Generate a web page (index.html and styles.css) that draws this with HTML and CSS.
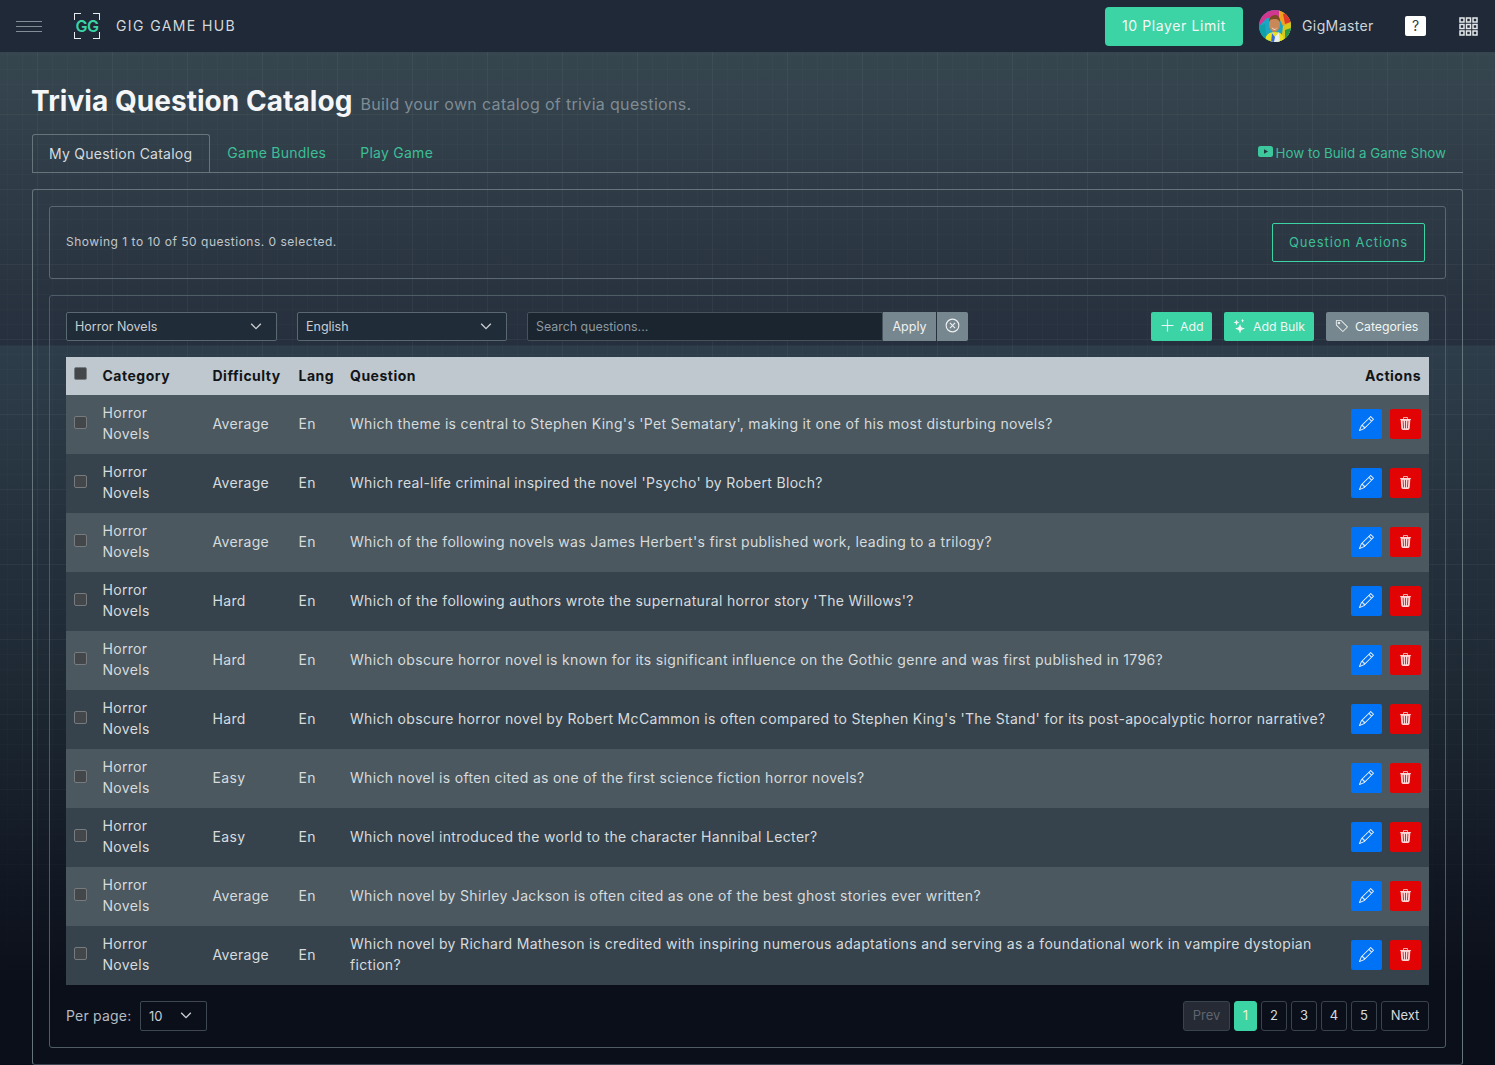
FILE: index.html
```html
<!DOCTYPE html>
<html>
<head>
    <meta charset="utf-8">
    <title>Trivia Question Catalog</title>
    <link rel="stylesheet" href="styles.css">
</head>
<body>
<svg class="sprite" xmlns="http://www.w3.org/2000/svg">
    <symbol id="i-pencil" viewBox="0 0 16 16"><path d="M12.146.146a.5.5 0 0 1 .708 0l3 3a.5.5 0 0 1 0 .708l-10 10a.5.5 0 0 1-.168.11l-5 2a.5.5 0 0 1-.65-.65l2-5a.5.5 0 0 1 .11-.168l10-10zM11.207 2.5 13.5 4.793 14.793 3.5 12.5 1.207 11.207 2.5zm1.586 3L10.5 3.207 4 9.707V10h.5a.5.5 0 0 1 .5.5v.5h.5a.5.5 0 0 1 .5.5v.5h.293l6.5-6.5zm-9.761 5.175-.106.106-1.528 3.821 3.821-1.528.106-.106A.5.5 0 0 1 5 12.5V12h-.5a.5.5 0 0 1-.5-.5V11h-.5a.5.5 0 0 1-.468-.325z"/></symbol>
    <symbol id="i-trash" viewBox="0 0 16 16"><path d="M11 1.5v1h3.5a.5.5 0 0 1 0 1h-.538l-.853 10.66A2 2 0 0 1 11.115 16h-6.23a2 2 0 0 1-1.994-1.84L2.038 3.5H1.5a.5.5 0 0 1 0-1H5v-1A1.5 1.5 0 0 1 6.5 0h3A1.5 1.5 0 0 1 11 1.5Zm-5 0v1h4v-1a.5.5 0 0 0-.5-.5h-3a.5.5 0 0 0-.5.5ZM4.5 5.029l.5 8.5a.5.5 0 1 0 .998-.06l-.5-8.5a.5.5 0 1 0-.998.06Zm6.53-.528a.5.5 0 0 0-.528.47l-.5 8.5a.5.5 0 0 0 .998.058l.5-8.5a.5.5 0 0 0-.47-.528ZM8 4.5a.5.5 0 0 0-.5.5v8.5a.5.5 0 0 0 1 0V5a.5.5 0 0 0-.5-.5Z"/></symbol>
    <symbol id="i-chevron" viewBox="0 0 16 16"><path d="M2.5 5.5 8 11l5.5-5.5" fill="none" stroke="currentColor" stroke-width="1.6"/></symbol>
</svg>

<header class="topbar">
    <div class="menu-lines"><span></span><span></span><span></span></div>
    <div class="logo">
        <i class="corner tl"></i><i class="corner tr"></i><i class="corner bl"></i><i class="corner br"></i>
        <span class="logo-text">GG</span>
    </div>
    <span class="brand">GIG GAME HUB</span>
    <div class="topbar-right">
        <a class="limit-btn">10 Player Limit</a>
        <svg class="avatar" viewBox="0 0 32 32">
            <defs><clipPath id="avatar-clip"><circle cx="16" cy="16" r="16"/></clipPath></defs>
            <g clip-path="url(#avatar-clip)">
                <rect width="32" height="32" fill="#1aa6c4"/>
                <path d="M0 0h20v8H8L0 16z" fill="#d0388f"/>
                <path d="M20 0h12v14l-8 2-4-8z" fill="#f0a020"/>
                <path d="M24 4l8-2v10l-6 2z" fill="#e03a2a"/>
                <path d="M0 16l6-2 2 18H0z" fill="#12a0a8"/>
                <path d="M24 16l8-4v20H22z" fill="#d8c81c"/>
                <path d="M26 20l6-2v8l-6 2z" fill="#2a9a48"/>
                <path d="M6 32c0-7 4-10 10-10s9 3 9 10z" fill="#e8e020"/>
                <path d="M13 22l3 5 4-5 1 10h-9z" fill="#e6eef2"/>
                <path d="M13 23l3 4-1 5h-3z" fill="#3a6ad0"/>
                <ellipse cx="15.500" cy="14" rx="5.500" ry="8" fill="#c88858"/>
                <path d="M10 12c0-5 3-7 6-7s5 2 5 7c-2-3-3-3-5-3s-5 0-6 3z" fill="#7a4a20"/>
                <path d="M12.500 17c2 2.500 5 2.500 6 0-1 3.500-5 3.500-6 0z" fill="#f6f0e6"/>
            </g>
        </svg>
        <span class="username">GigMaster</span>
        <span class="help-btn">?</span>
        <svg class="apps" viewBox="0 0 19 19" fill="none" stroke="#e6e9ec" stroke-width="1.500">
            <rect x="1" y="1" width="4" height="4"/><rect x="7.500" y="1" width="4" height="4"/><rect x="14" y="1" width="4" height="4"/>
            <rect x="1" y="7.500" width="4" height="4"/><rect x="7.500" y="7.500" width="4" height="4"/><rect x="14" y="7.500" width="4" height="4"/>
            <rect x="1" y="14" width="4" height="4"/><rect x="7.500" y="14" width="4" height="4"/><rect x="14" y="14" width="4" height="4"/>
        </svg>
    </div>
</header>

<main class="page">
    <div class="title-row">
        <h1>Trivia Question Catalog</h1>
        <span class="subtitle">Build your own catalog of trivia questions.</span>
    </div>

    <nav class="tabs">
        <a class="tab active">My Question Catalog</a>
        <a class="tab">Game Bundles</a>
        <a class="tab">Play Game</a>
        <a class="how-to">
            <svg viewBox="0 0 15 11"><rect width="15" height="11" rx="2.500" fill="#3cc79d"/><path d="M6 3.200v4.600L10 5.500z" fill="#24343d"/></svg>
            How to Build a Game Show
        </a>
    </nav>

    <section class="card">
        <div class="panel status-panel">
            <span class="status-text">Showing 1 to 10 of 50 questions. 0 selected.</span>
            <a class="outline-btn">Question Actions</a>
        </div>

        <div class="panel table-panel">
            <div class="toolbar">
                <div class="select category-select"><span>Horror Novels</span><svg><use href="#i-chevron"/></svg></div>
                <div class="select lang-select"><span>English</span><svg><use href="#i-chevron"/></svg></div>
                <div class="search-group">
                    <div class="search-input">Search questions...</div>
                    <a class="gray-btn apply">Apply</a>
                    <a class="gray-btn clear">
                        <svg viewBox="0 0 16 16" fill="none" stroke="currentColor" stroke-width="1.200"><circle cx="8" cy="8" r="6.800"/><path d="M5.300 5.300l5.400 5.400M10.700 5.300l-5.400 5.400"/></svg>
                    </a>
                </div>
                <div class="toolbar-right">
                    <a class="action-btn green add">
                        <svg viewBox="0 0 12 12" fill="none" stroke="currentColor" stroke-width="1.100"><path d="M6 .5v11M.5 6h11"/></svg>
                        Add
                    </a>
                    <a class="action-btn green bulk">
                        <svg viewBox="0 0 16 16" fill="currentColor"><path d="M7.657 6.247c.11-.33.576-.33.686 0l.645 1.937a2.890 2.890 0 0 0 1.829 1.828l1.936.645c.33.11.33.576 0 .686l-1.937.645a2.890 2.890 0 0 0-1.828 1.829l-.645 1.936a.361.361 0 0 1-.686 0l-.645-1.937a2.890 2.890 0 0 0-1.828-1.828l-1.937-.645a.361.361 0 0 1 0-.686l1.937-.645a2.890 2.890 0 0 0 1.828-1.828l.645-1.937zM3.794 1.148a.217.217 0 0 1 .412 0l.387 1.162c.173.518.579.924 1.097 1.097l1.162.387a.217.217 0 0 1 0 .412l-1.162.387A1.734 1.734 0 0 0 4.593 5.690l-.387 1.162a.217.217 0 0 1-.412 0L3.407 5.690A1.734 1.734 0 0 0 2.310 4.593l-1.162-.387a.217.217 0 0 1 0-.412l1.162-.387A1.734 1.734 0 0 0 3.407 2.310l.387-1.162zM10.863.099a.145.145 0 0 1 .274 0l.258.774c.115.346.386.617.732.732l.774.258a.145.145 0 0 1 0 .274l-.774.258a1.156 1.156 0 0 0-.732.732l-.258.774a.145.145 0 0 1-.274 0l-.258-.774a1.156 1.156 0 0 0-.732-.732L9.100 2.137a.145.145 0 0 1 0-.274l.774-.258c.346-.115.617-.386.732-.732L10.863.100z"/></svg>
                        Add Bulk
                    </a>
                    <a class="action-btn gray cats">
                        <svg viewBox="0 0 16 16" fill="currentColor"><path d="M6 4.500a1.500 1.500 0 1 1-3 0 1.500 1.500 0 0 1 3 0zm-1 0a.5.5 0 1 0-1 0 .5.5 0 0 0 1 0z"/><path d="M2 1h4.586a1 1 0 0 1 .707.293l7 7a1 1 0 0 1 0 1.414l-4.586 4.586a1 1 0 0 1-1.414 0l-7-7A1 1 0 0 1 1 6.586V2a1 1 0 0 1 1-1zm0 5.586 7 7L13.586 9l-7-7H2v4.586z"/></svg>
                        Categories
                    </a>
                </div>
            </div>

            <table class="questions">
                <colgroup>
                    <col class="c-check"><col class="c-cat"><col class="c-diff"><col class="c-lang"><col><col class="c-act">
                </colgroup>
                <thead>
                    <tr>
                        <th><i class="check"></i></th>
                        <th>Category</th>
                        <th>Difficulty</th>
                        <th>Lang</th>
                        <th>Question</th>
                        <th class="right">Actions</th>
                    </tr>
                </thead>
                <tbody>
                    <tr>
                        <td><i class="check"></i></td><td>Horror Novels</td><td>Average</td><td>En</td>
                        <td>Which theme is central to Stephen King's 'Pet Sematary', making it one of his most disturbing novels?</td>
                        <td class="right"><a class="icon-btn edit"><svg><use href="#i-pencil"/></svg></a><a class="icon-btn del"><svg><use href="#i-trash"/></svg></a></td>
                    </tr>
                    <tr>
                        <td><i class="check"></i></td><td>Horror Novels</td><td>Average</td><td>En</td>
                        <td>Which real-life criminal inspired the novel 'Psycho' by Robert Bloch?</td>
                        <td class="right"><a class="icon-btn edit"><svg><use href="#i-pencil"/></svg></a><a class="icon-btn del"><svg><use href="#i-trash"/></svg></a></td>
                    </tr>
                    <tr>
                        <td><i class="check"></i></td><td>Horror Novels</td><td>Average</td><td>En</td>
                        <td>Which of the following novels was James Herbert's first published work, leading to a trilogy?</td>
                        <td class="right"><a class="icon-btn edit"><svg><use href="#i-pencil"/></svg></a><a class="icon-btn del"><svg><use href="#i-trash"/></svg></a></td>
                    </tr>
                    <tr>
                        <td><i class="check"></i></td><td>Horror Novels</td><td>Hard</td><td>En</td>
                        <td>Which of the following authors wrote the supernatural horror story 'The Willows'?</td>
                        <td class="right"><a class="icon-btn edit"><svg><use href="#i-pencil"/></svg></a><a class="icon-btn del"><svg><use href="#i-trash"/></svg></a></td>
                    </tr>
                    <tr>
                        <td><i class="check"></i></td><td>Horror Novels</td><td>Hard</td><td>En</td>
                        <td>Which obscure horror novel is known for its significant influence on the Gothic genre and was first published in 1796?</td>
                        <td class="right"><a class="icon-btn edit"><svg><use href="#i-pencil"/></svg></a><a class="icon-btn del"><svg><use href="#i-trash"/></svg></a></td>
                    </tr>
                    <tr>
                        <td><i class="check"></i></td><td>Horror Novels</td><td>Hard</td><td>En</td>
                        <td>Which obscure horror novel by Robert McCammon is often compared to Stephen King's 'The Stand' for its post-apocalyptic horror narrative?</td>
                        <td class="right"><a class="icon-btn edit"><svg><use href="#i-pencil"/></svg></a><a class="icon-btn del"><svg><use href="#i-trash"/></svg></a></td>
                    </tr>
                    <tr>
                        <td><i class="check"></i></td><td>Horror Novels</td><td>Easy</td><td>En</td>
                        <td>Which novel is often cited as one of the first science fiction horror novels?</td>
                        <td class="right"><a class="icon-btn edit"><svg><use href="#i-pencil"/></svg></a><a class="icon-btn del"><svg><use href="#i-trash"/></svg></a></td>
                    </tr>
                    <tr>
                        <td><i class="check"></i></td><td>Horror Novels</td><td>Easy</td><td>En</td>
                        <td>Which novel introduced the world to the character Hannibal Lecter?</td>
                        <td class="right"><a class="icon-btn edit"><svg><use href="#i-pencil"/></svg></a><a class="icon-btn del"><svg><use href="#i-trash"/></svg></a></td>
                    </tr>
                    <tr>
                        <td><i class="check"></i></td><td>Horror Novels</td><td>Average</td><td>En</td>
                        <td>Which novel by Shirley Jackson is often cited as one of the best ghost stories ever written?</td>
                        <td class="right"><a class="icon-btn edit"><svg><use href="#i-pencil"/></svg></a><a class="icon-btn del"><svg><use href="#i-trash"/></svg></a></td>
                    </tr>
                    <tr>
                        <td><i class="check"></i></td><td>Horror Novels</td><td>Average</td><td>En</td>
                        <td>Which novel by Richard Matheson is credited with inspiring numerous adaptations and serving as a foundational work in vampire dystopian fiction?</td>
                        <td class="right"><a class="icon-btn edit"><svg><use href="#i-pencil"/></svg></a><a class="icon-btn del"><svg><use href="#i-trash"/></svg></a></td>
                    </tr>
                </tbody>
            </table>

            <div class="table-footer">
                <label class="per-page">Per page:</label>
                <div class="select page-select"><span>10</span><svg><use href="#i-chevron"/></svg></div>
                <div class="pagination">
                    <a class="pg prev">Prev</a>
                    <a class="pg current">1</a>
                    <a class="pg num">2</a>
                    <a class="pg num">3</a>
                    <a class="pg num">4</a>
                    <a class="pg num">5</a>
                    <a class="pg next">Next</a>
                </div>
            </div>
        </div>
    </section>
</main>
</body>
</html>
```

FILE: styles.css
```css
html, body, h1 {
    margin: 0;
    padding: 0;
}

body {
    min-height: 1065px;
    color: #d6dbde;
    font: 14px/21px Inter, "Noto Sans", sans-serif;
    background-color: #0b0f1a;
    background-image:
        linear-gradient(to bottom, rgba(11, 15, 26, 0) 690px, #0b0f1a 985px),
        linear-gradient(to right, rgba(255, 255, 255, .028) 1px, transparent 1px),
        linear-gradient(to bottom, rgba(255, 255, 255, .028) 1px, transparent 1px),
        linear-gradient(to right, rgba(255, 255, 255, .014) 1px, transparent 1px),
        linear-gradient(to bottom, rgba(255, 255, 255, .014) 1px, transparent 1px),
        linear-gradient(to bottom, #36464f 52px, #262f3d 345px, #2e3d4a 346px, #1d2833 690px);
    background-size: 100% 100%, 75px 75px, 75px 75px, 15px 15px, 15px 15px, 100% 100%;
    background-position: 0 0, 37px 39px, 37px 39px, 7px 9px, 7px 9px, 0 0;
    background-repeat: no-repeat, repeat, repeat, repeat, repeat, no-repeat;
}

a {
    cursor: pointer;
}

.sprite {
    display: none;
}

/* top bar */
.topbar {
    display: flex;
    align-items: center;
    box-sizing: border-box;
    height: 52px;
    padding: 0 17px 0 16px;
    background: #1f2937;
}

.menu-lines {
    display: flex;
    flex-direction: column;
    gap: 4px;
    width: 26px;
    margin-right: 32px;
}

.menu-lines span {
    display: block;
    height: 1px;
    background: #838d97;
}

.logo {
    position: relative;
    display: flex;
    align-items: center;
    justify-content: center;
    width: 26px;
    height: 26px;
    margin-right: 16px;
}

.logo-text {
    color: #3cd3a5;
    font-size: 16px;
    font-weight: 600;
    letter-spacing: -.5px;
}

.corner {
    position: absolute;
    width: 6px;
    height: 6px;
    border: 0 solid #e8ebee;
}

.corner.tl { top: 0; left: 0; border-width: 1px 0 0 1px; }
.corner.tr { top: 0; right: 0; border-width: 1px 1px 0 0; }
.corner.bl { bottom: 0; left: 0; border-width: 0 0 1px 1px; }
.corner.br { bottom: 0; right: 0; border-width: 0 1px 1px 0; }

.brand {
    padding-bottom: 2px;
    color: #d3d8dc;
    font-size: 14px;
    letter-spacing: 1.4px;
}

.topbar-right {
    display: flex;
    align-items: center;
    margin-left: auto;
}

.limit-btn {
    box-sizing: border-box;
    width: 138px;
    height: 39px;
    margin-right: 16px;
    border-radius: 4px;
    background: #3cd3a5;
    color: #f2f7f5;
    line-height: 37px;
    text-align: center;
    letter-spacing: .6px;
}

.avatar {
    width: 32px;
    height: 32px;
    margin-right: 11px;
}

.username {
    width: 103px;
    padding-bottom: 2px;
    color: #cfd4d8;
    letter-spacing: .4px;
}

.help-btn {
    width: 21px;
    height: 20px;
    margin-right: 33px;
    border-radius: 2px;
    background: #fff;
    color: #333b44;
    font-size: 14px;
    line-height: 20px;
    text-align: center;
}

.apps {
    width: 19px;
    height: 19px;
}

/* page head */
.page {
    padding: 0 32px;
}

.title-row {
    display: flex;
    align-items: flex-start;
    gap: 8px;
    height: 82px;
    box-sizing: border-box;
    padding-top: 31px;
}

h1 {
    margin-left: -1px;
    color: #f4f6f7;
    font-size: 28px;
    font-weight: 700;
    line-height: 36px;
    letter-spacing: .05px;
}

.subtitle {
    margin-top: 11px;
    color: #7f8c94;
    font-size: 16px;
    letter-spacing: .33px;
}

.tabs {
    display: flex;
    align-items: flex-end;
    height: 39px;
    border-bottom: 1px solid #66747c;
    box-sizing: border-box;
}

.tab {
    box-sizing: border-box;
    height: 38px;
    padding: 0 17px;
    color: #3cbf97;
    line-height: 37px;
    letter-spacing: .25px;
}

.tab.active {
    border: 1px solid #66747c;
    border-bottom: 0;
    border-radius: 3px 3px 0 0;
    padding: 0 17px 0 16px;
    color: #d6dbde;
}

.how-to {
    display: flex;
    align-items: center;
    gap: 3px;
    height: 38px;
    margin-left: auto;
    padding-right: 17px;
    color: #3cbf97;
    font-size: 13.350px;
}

.how-to svg {
    width: 15px;
    height: 11px;
    margin-top: -3px;
}

/* cards */
.card {
    margin-top: 16px;
    padding: 16px;
    border: 1px solid #66747c;
    border-bottom-color: #3a4550;
    border-radius: 3px;
}

.panel {
    border: 1px solid #5a6872;
    border-radius: 3px;
    padding: 16px;
}

.panel.table-panel {
    margin-top: 16px;
    border-color: #4f5c66;
}

.status-panel {
    display: flex;
    align-items: center;
    justify-content: space-between;
    height: 73px;
    box-sizing: border-box;
    padding-right: 20px;
}

.status-text {
    padding-bottom: 2px;
    color: #c0c7cc;
    font-size: 12px;
    letter-spacing: .5px;
}

.outline-btn {
    box-sizing: border-box;
    width: 153px;
    height: 39px;
    border: 1px solid #3cd3a5;
    border-radius: 2px;
    color: #3cbf97;
    line-height: 37px;
    text-align: center;
    font-size: 13px;
    letter-spacing: .9px;
}

/* toolbar */
.toolbar {
    display: flex;
    align-items: center;
    height: 29px;
    margin-bottom: 16px;
    font-size: 13px;
}

.select {
    display: flex;
    align-items: center;
    justify-content: space-between;
    box-sizing: border-box;
    height: 29px;
    padding: 0 8px;
    border: 1px solid #5a6872;
    border-radius: 2px;
    background: #212c39;
    color: #c9cfd3;
    font-size: 12.500px;
}

.select svg {
    width: 14px;
    height: 14px;
    margin-right: 5px;
    margin-top: -2px;
}

.category-select {
    width: 211px;
    margin-right: 20px;
}

.lang-select {
    width: 210px;
    margin-right: 20px;
}

.search-group {
    display: flex;
    height: 29px;
}

.search-input {
    box-sizing: border-box;
    width: 356px;
    height: 29px;
    padding: 0 8px;
    border: 1px solid #46525c;
    border-radius: 2px 0 0 2px;
    background: #1a2530;
    color: #8f999f;
    font-size: 12.400px;
    line-height: 27px;
}

.gray-btn {
    box-sizing: border-box;
    height: 29px;
    background: #76878f;
    color: #eef1f2;
    line-height: 29px;
    text-align: center;
    font-size: 12.500px;
}

.gray-btn.apply {
    width: 53px;
    margin-right: 1px;
}

.gray-btn.clear {
    display: flex;
    align-items: center;
    justify-content: center;
    width: 31px;
    border-radius: 0 2px 2px 0;
}

.clear svg {
    width: 15px;
    height: 15px;
    margin-top: -2px;
}

.toolbar-right {
    display: flex;
    gap: 12px;
    margin-left: auto;
}

.action-btn {
    display: flex;
    align-items: center;
    box-sizing: border-box;
    height: 29px;
    padding-left: 10px;
    border-radius: 2px;
    color: #f0f6f4;
    font-size: 12.300px;
}

.action-btn svg {
    width: 13px;
    height: 13px;
    margin-right: 6px;
    margin-top: -2px;
}

.action-btn.bulk svg,
.action-btn.cats svg {
    width: 14px;
    height: 14px;
    margin-left: -1px;
}

.action-btn.green { background: #3cd3a5; }
.action-btn.gray { background: #76878f; }
.action-btn.add { width: 61px; }
.action-btn.bulk { width: 90px; }
.action-btn.cats { width: 103px; }

/* table */
.questions {
    width: 100%;
    border-collapse: collapse;
    table-layout: fixed;
}

.c-check { width: 28.500px; }
.c-cat { width: 110px; }
.c-diff { width: 86px; }
.c-lang { width: 51.500px; }
.c-act { width: 86px; }

.questions th {
    height: 38px;
    box-sizing: border-box;
    padding: 0 8px 2px;
    background: #bfc8ce;
    color: #111418;
    font-size: 14px;
    font-weight: 700;
    text-align: left;
    letter-spacing: .5px;
}

.questions td {
    height: 59px;
    box-sizing: border-box;
    padding: 0 8px 3px;
    color: #d6dbde;
    font-size: 14px;
    letter-spacing: .32px;
}

.questions tbody tr:nth-child(odd) { background: #4b585f; }
.questions tbody tr:nth-child(even) { background: #36434c; }

.questions .right {
    text-align: right;
}

.questions td.right,
.questions td:first-child {
    padding-bottom: 1px;
}

.check {
    display: block;
    box-sizing: border-box;
    width: 13px;
    height: 13px;
    margin-top: -3px;
    border: 1px solid #767b7f;
    border-radius: 2px;
    background: #43474a;
}

.icon-btn {
    display: inline-flex;
    align-items: center;
    justify-content: center;
    width: 31px;
    height: 30px;
    border-radius: 2px;
    vertical-align: middle;
}

.icon-btn + .icon-btn {
    margin-left: 8px;
}

.icon-btn svg {
    width: 13px;
    height: 13px;
    margin-top: -2px;
    fill: #f0f4f8;
}

.icon-btn.edit svg {
    width: 15px;
    height: 15px;
}

.icon-btn.edit { background: #0072f5; }
.icon-btn.del { background: #e20404; }
.icon-btn.del svg { fill: #fbd7d7; }

/* footer */
.table-footer {
    display: flex;
    align-items: center;
    height: 30px;
    margin-top: 16px;
}

.per-page {
    width: 74px;
    padding-bottom: 2px;
    color: #b4bbc0;
    letter-spacing: .2px;
}

.page-select {
    width: 67px;
    height: 30px;
    background: transparent;
    border-color: #3f4852;
    font-size: 13px;
}

.pagination {
    display: flex;
    gap: 4px;
    margin-left: auto;
}

.pg {
    box-sizing: border-box;
    width: 26px;
    height: 30px;
    border: 1px solid #3a424d;
    border-radius: 3px;
    color: #d6dbde;
    font-size: 13px;
    line-height: 27px;
    text-align: center;
}

.pg.prev {
    width: 47px;
    background: #252a35;
    color: #5e656e;
}

.pg.current {
    width: 23px;
    border-color: #3cd3a5;
    background: #3cd3a5;
    color: #e4f5cc;
}

.pg.next {
    width: 48px;
}
```
